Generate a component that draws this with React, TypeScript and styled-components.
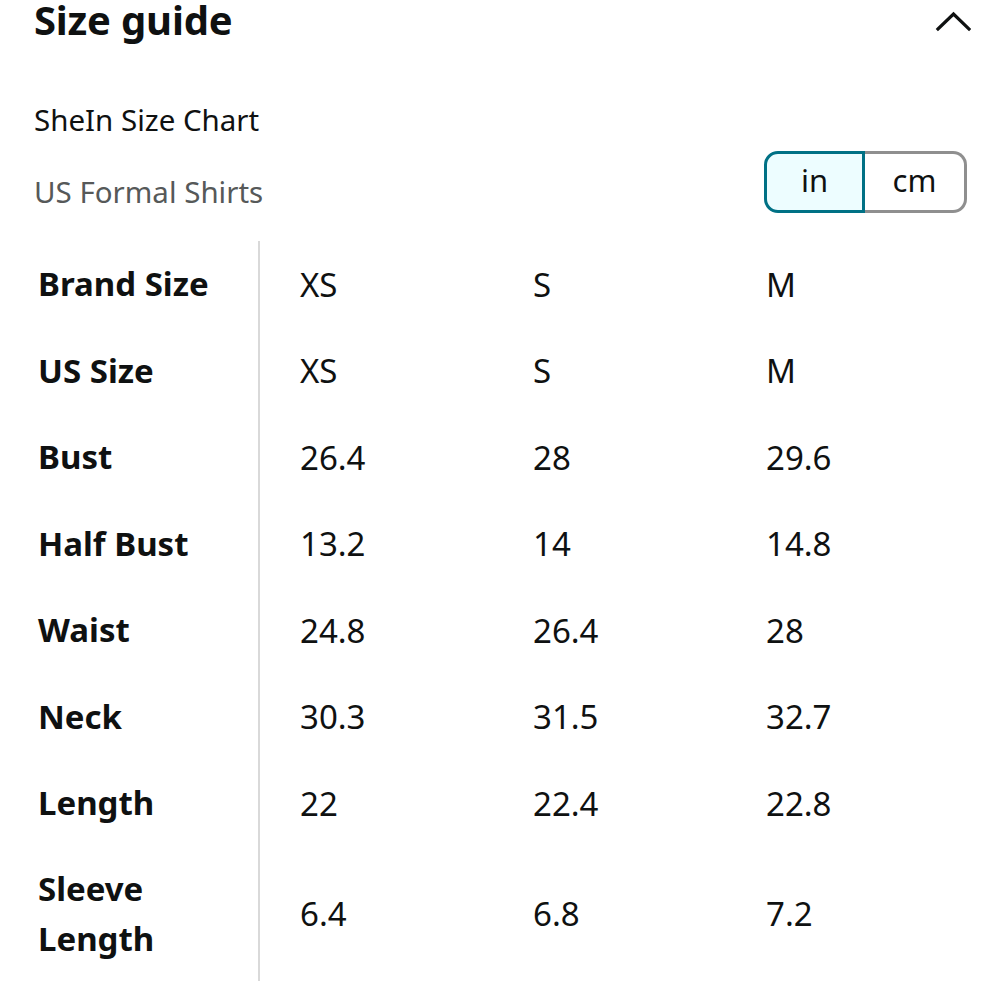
import React from "react";
import styled, { createGlobalStyle } from "styled-components";

const Global = createGlobalStyle`
  html, body { margin: 0; padding: 0; background: #fff; }
  body { font-family: "Noto Sans", "Open Sans", sans-serif; color: #0f1111; }
`;

const Page = styled.div`
  width: 1000px;
  height: 1000px;
  overflow: hidden;
  padding: 0 33px 0 34px;
  box-sizing: border-box;
`;

const Header = styled.div`
  display: flex;
  justify-content: space-between;
  align-items: flex-start;
  height: 42px;
`;

const Title = styled.h1`
  margin: 0;
  font-size: 40px;
  line-height: 40px;
  font-weight: 700;
  letter-spacing: -0.2px;
  padding-top: 0;
`;

const Chevron = styled.svg`
  width: 36px;
  height: 22px;
  margin-top: 11px;
  margin-right: -4px;
`;

const SubRow = styled.div`
  display: flex;
  justify-content: space-between;
  align-items: flex-end;
  margin-top: 56px;
`;

const SubTexts = styled.div`
  display: flex;
  flex-direction: column;
  gap: 28px;
`;

const SubTitle = styled.div<{ $muted?: boolean }>`
  font-size: 29.5px;
  line-height: 44px;
  color: ${(p) => (p.$muted ? "#565959" : "#0f1111")};
`;

const Toggle = styled.div`
  display: flex;
  margin-bottom: 1px;
`;

const ToggleButton = styled.div<{ $active?: boolean }>`
  width: ${(p) => (p.$active ? "101px" : "102px")};
  height: 62px;
  box-sizing: border-box;
  display: flex;
  align-items: center;
  justify-content: center;
  font-size: 31px;
  padding-bottom: 4px;
  border: 3px solid ${(p) => (p.$active ? "#007185" : "#8f8f8f")};
  ${(p) => (p.$active ? "" : "border-left: none;")}
  background: ${(p) => (p.$active ? "#edfdff" : "#fff")};
  border-radius: ${(p) => (p.$active ? "14px 0 0 14px" : "0 14px 14px 0")};
`;

const Table = styled.div`
  display: grid;
  grid-template-columns: 226px 233px 233px 1fr;
  margin-top: 27px;
`;

const LabelCell = styled.div<{ $tall?: boolean }>`
  height: ${(p) => (p.$tall ? "134px" : "86.5px")};
  display: flex;
  align-items: center;
  padding-left: 4px;
  font-size: 33px;
  font-weight: 700;
  line-height: 50px;
  border-right: 2px solid #d9d9d9;
  box-sizing: border-box;
`;

const ValueCell = styled.div<{ $tall?: boolean }>`
  height: ${(p) => (p.$tall ? "134px" : "86.5px")};
  display: flex;
  align-items: center;
  padding-left: 40px;
  font-size: 33px;
  box-sizing: border-box;
`;

const rows: [string, string, string, string][] = [
  ["Brand Size", "XS", "S", "M"],
  ["US Size", "XS", "S", "M"],
  ["Bust", "26.4", "28", "29.6"],
  ["Half Bust", "13.2", "14", "14.8"],
  ["Waist", "24.8", "26.4", "28"],
  ["Neck", "30.3", "31.5", "32.7"],
  ["Length", "22", "22.4", "22.8"],
  ["Sleeve Length", "6.4", "6.8", "7.2"],
];

export default function App() {
  return (
    <>
      <Global />
      <Page>
        <Header>
          <Title>Size guide</Title>
          <Chevron viewBox="0 0 36 22">
            <polyline
              points="3,18 18.5,3 34,18"
              fill="none"
              stroke="#0f1111"
              strokeWidth="3.2"
              strokeLinecap="square"
            />
          </Chevron>
        </Header>
        <SubRow>
          <SubTexts>
            <SubTitle>SheIn Size Chart</SubTitle>
            <SubTitle $muted>US Formal Shirts</SubTitle>
          </SubTexts>
          <Toggle>
            <ToggleButton $active>in</ToggleButton>
            <ToggleButton>cm</ToggleButton>
          </Toggle>
        </SubRow>
        <Table>
          {rows.map((r) => {
            const tall = r[0] === "Sleeve Length";
            return (
              <React.Fragment key={r[0]}>
                <LabelCell $tall={tall}>
                  {tall ? (
                    <span>
                      Sleeve
                      <br />
                      Length
                    </span>
                  ) : (
                    r[0]
                  )}
                </LabelCell>
                <ValueCell $tall={tall}>{r[1]}</ValueCell>
                <ValueCell $tall={tall}>{r[2]}</ValueCell>
                <ValueCell $tall={tall}>{r[3]}</ValueCell>
              </React.Fragment>
            );
          })}
        </Table>
      </Page>
    </>
  );
}
